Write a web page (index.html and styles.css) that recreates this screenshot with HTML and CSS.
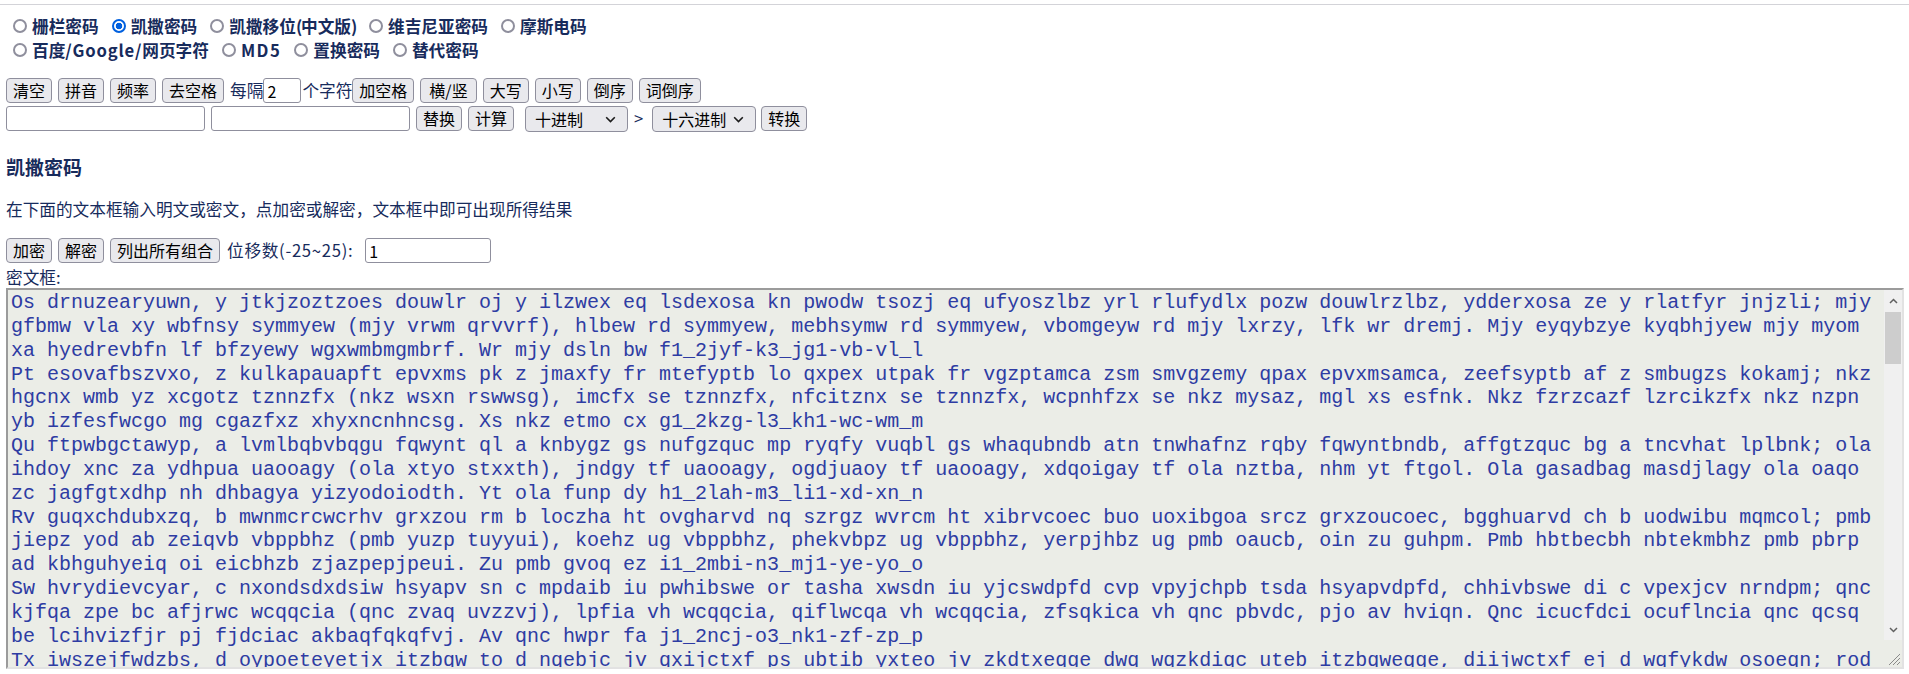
FILE: index.html
```html
<!DOCTYPE html>
<html lang="zh-CN">
<head>
<meta charset="utf-8">
<title>凯撒密码</title>
<link rel="stylesheet" href="styles.css">
</head>
<body>
<div class="topbar"></div>
<div class="page">
  <div class="modes">
    <div class="mode-row">
      <label class="mode"><input class="radio" type="radio" name="m"><span>栅栏密码</span></label>
      <label class="mode"><input class="radio" type="radio" name="m" checked><span>凯撒密码</span></label>
      <label class="mode"><input class="radio" type="radio" name="m"><span>凯撒移位<span class="paren">(</span>中文版<span class="paren">)</span></span></label>
      <label class="mode"><input class="radio" type="radio" name="m"><span>维吉尼亚密码</span></label>
      <label class="mode"><input class="radio" type="radio" name="m"><span>摩斯电码</span></label>
    </div>
    <div class="mode-row">
      <label class="mode"><input class="radio" type="radio" name="m"><span>百度<span class="latin">/Google/</span>网页字符</span></label>
      <label class="mode"><input class="radio" type="radio" name="m"><span class="latin-md">MD5</span></label>
      <label class="mode"><input class="radio" type="radio" name="m"><span>置换密码</span></label>
      <label class="mode"><input class="radio" type="radio" name="m"><span>替代密码</span></label>
    </div>
  </div>

  <div class="tools">
    <div class="tool-row">
      <button class="btn">清空</button>
      <button class="btn">拼音</button>
      <button class="btn">频率</button>
      <button class="btn">去空格</button>
      <span class="lbl">每隔</span><input class="text-input every" value="2"><span class="lbl lbl-after">个字符</span><button class="btn">加空格</button>
      <button class="btn btn-slash">横/竖</button>
      <button class="btn">大写</button>
      <button class="btn">小写</button>
      <button class="btn">倒序</button>
      <button class="btn">词倒序</button>
    </div>
    <div class="tool-row">
      <input class="text-input wide">
      <input class="text-input wide">
      <button class="btn">替换</button>
      <button class="btn btn-calc">计算</button>
      <span class="select sel-a">
        <select class="sel"><option>十进制</option><option>二进制</option><option>八进制</option><option>十六进制</option></select>
        <svg class="chev" width="11" height="7" viewBox="0 0 11 7"><polyline points="1.2,1.2 5.5,5.5 9.8,1.2" fill="none" stroke="#1b1b1b" stroke-width="1.6"/></svg>
      </span>
      <span class="lbl gt">&gt;</span>
      <span class="select sel-b">
        <select class="sel"><option>十六进制</option><option>十进制</option><option>二进制</option><option>八进制</option></select>
        <svg class="chev" width="11" height="7" viewBox="0 0 11 7"><polyline points="1.2,1.2 5.5,5.5 9.8,1.2" fill="none" stroke="#1b1b1b" stroke-width="1.6"/></svg>
      </span>
      <button class="btn">转换</button>
    </div>
  </div>

  <h3 class="title">凯撒密码</h3>
  <p class="desc">在下面的文本框输入明文或密文，点加密或解密，文本框中即可出现所得结果</p>

  <div class="actions">
    <button class="btn">加密</button>
    <button class="btn">解密</button>
    <button class="btn btn-list">列出所有组合</button>
    <span class="lbl shift-lbl">位移数(-25~25):</span>
    <input class="text-input shift" value="1">
  </div>
  <div class="field-label">密文框:</div>

  <div class="ta-wrap">
<textarea class="cipher" spellcheck="false">Os drnuzearyuwn, y jtkjzoztzoes douwlr oj y ilzwex eq lsdexosa kn pwodw tsozj eq ufyoszlbz yrl rlufydlx pozw douwlrzlbz, ydderxosa ze y rlatfyr jnjzli; mjy gfbmw vla xy wbfnsy symmyew (mjy vrwm qrvvrf), hlbew rd symmyew, mebhsymw rd symmyew, vbomgeyw rd mjy lxrzy, lfk wr dremj. Mjy eyqybzye kyqbhjyew mjy myom xa hyedrevbfn lf bfzyewy wgxwmbmgmbrf. Wr mjy dsln bw f1_2jyf-k3_jg1-vb-vl_l
Pt esovafbszvxo, z kulkapauapft epvxms pk z jmaxfy fr mtefyptb lo qxpex utpak fr vgzptamca zsm smvgzemy qpax epvxmsamca, zeefsyptb af z smbugzs kokamj; nkz hgcnx wmb yz xcgotz tznnzfx (nkz wsxn rswwsg), imcfx se tznnzfx, nfcitznx se tznnzfx, wcpnhfzx se nkz mysaz, mgl xs esfnk. Nkz fzrzcazf lzrcikzfx nkz nzpn yb izfesfwcgo mg cgazfxz xhyxncnhncsg. Xs nkz etmo cx g1_2kzg-l3_kh1-wc-wm_m
Qu ftpwbgctawyp, a lvmlbqbvbqgu fqwynt ql a knbygz gs nufgzquc mp ryqfy vuqbl gs whaqubndb atn tnwhafnz rqby fqwyntbndb, affgtzquc bg a tncvhat lplbnk; ola ihdoy xnc za ydhpua uaooagy (ola xtyo stxxth), jndgy tf uaooagy, ogdjuaoy tf uaooagy, xdqoigay tf ola nztba, nhm yt ftgol. Ola gasadbag masdjlagy ola oaqo zc jagfgtxdhp nh dhbagya yizyodoiodth. Yt ola funp dy h1_2lah-m3_li1-xd-xn_n
Rv guqxchdubxzq, b mwnmcrcwcrhv grxzou rm b loczha ht ovgharvd nq szrgz wvrcm ht xibrvcoec buo uoxibgoa srcz grxzoucoec, bgghuarvd ch b uodwibu mqmcol; pmb jiepz yod ab zeiqvb vbppbhz (pmb yuzp tuyyui), koehz ug vbppbhz, phekvbpz ug vbppbhz, yerpjhbz ug pmb oaucb, oin zu guhpm. Pmb hbtbecbh nbtekmbhz pmb pbrp ad kbhguhyeiq oi eicbhzb zjazpepjpeui. Zu pmb gvoq ez i1_2mbi-n3_mj1-ye-yo_o
Sw hvrydievcyar, c nxondsdxdsiw hsyapv sn c mpdaib iu pwhibswe or tasha xwsdn iu yjcswdpfd cvp vpyjchpb tsda hsyapvdpfd, chhivbswe di c vpexjcv nrndpm; qnc kjfqa zpe bc afjrwc wcqqcia (qnc zvaq uvzzvj), lpfia vh wcqqcia, qiflwcqa vh wcqqcia, zfsqkica vh qnc pbvdc, pjo av hviqn. Qnc icucfdci ocuflncia qnc qcsq be lcihvizfjr pj fjdciac akbaqfqkqfvj. Av qnc hwpr fa j1_2ncj-o3_nk1-zf-zp_p
Tx iwszejfwdzbs, d oypoeteyetjx itzbqw to d nqebjc jv qxijctxf ps ubtib yxteo jv zkdtxeqge dwq wqzkdiqc uteb itzbqweqge, diijwctxf ej d wqfykdw osoeqn; rod lkgrb aqf cd bgksxd xdrrdjb (rod awbr vwaawk), mqgjb wi xdrrdjb, rjgmxdrb wi xdrrdjb, agtrljdb wi rod qcwed, qkp bw iwjro. Rod jdvdgedj pdvgmodjb rod rdtr cf mdjiwjagks qk gkedjbd blcbrgrlrgwk. Bw rod ixqs gb k1_2odk-p3_ol1-ag-aq_q</textarea>
    <div class="sb">
      <div class="sb-btn">
        <svg width="9" height="6" viewBox="0 0 9 6"><polyline points="1,5 4.5,1.5 8,5" fill="none" stroke="#606060" stroke-width="1.5"/></svg>
      </div>
      <div class="sb-thumb"></div>
      <div class="sb-btn sb-down">
        <svg width="9" height="6" viewBox="0 0 9 6"><polyline points="1,1 4.5,4.5 8,1" fill="none" stroke="#606060" stroke-width="1.5"/></svg>
      </div>
    </div>
    <svg class="grip" width="14" height="14" viewBox="0 0 14 14">
      <line x1="13" y1="2" x2="2" y2="13" stroke="#8a8a8a" stroke-width="1"/>
      <line x1="13" y1="6" x2="6" y2="13" stroke="#8a8a8a" stroke-width="1"/>
      <line x1="13" y1="10" x2="10" y2="13" stroke="#8a8a8a" stroke-width="1"/>
    </svg>
  </div>
</div>
</body>
</html>
```
FILE: styles.css
```css
* {
  box-sizing: border-box;
}

html,
body {
  margin: 0;
  background: #ffffff;
}

body {
  font-family: "Noto Sans CJK SC", "Noto Sans", sans-serif;
  font-size: 16.67px;
  color: #172b5c;
}

.topbar {
  height: 5px;
  border-bottom: 1px solid #d3d3d8;
}

.page {
  padding: 0 5px 0 6px;
}

/* mode radios */
.modes {
  margin-top: 9px;
  padding-left: 7px;
  font-weight: 700;
}

.mode-row {
  display: flex;
  align-items: center;
  height: 24px;
  gap: 13px;
  line-height: 24px;
}

.mode {
  display: flex;
  align-items: center;
  gap: 5px;
  white-space: nowrap;
}

.paren {
  letter-spacing: -1.2px;
}

.latin {
  letter-spacing: 0.8px;
}

.latin-md {
  letter-spacing: 1.5px;
}

.radio {
  appearance: none;
  -webkit-appearance: none;
  width: 14px;
  height: 14px;
  margin: 0;
  border: 2px solid #8f8f9d;
  border-radius: 50%;
  background: #ffffff;
}

.radio:checked {
  border-color: #0060df;
  background: radial-gradient(circle, #0060df 0 3px, #ffffff 3.6px);
}

/* tool rows */
.tools {
  margin-top: 16px;
  display: flex;
  flex-direction: column;
  gap: 3px;
}

.tool-row {
  display: flex;
  align-items: center;
  height: 25px;
}

.btn {
  height: 25px;
  padding: 0 6px;
  margin: 0 6px 0 0;
  border: 1px solid #8f8f9d;
  border-radius: 4px;
  background: #e9e9ed;
  color: #000000;
  font-family: "Noto Sans CJK SC", "Noto Sans", sans-serif;
  font-size: 16px;
  line-height: 21px;
}

.btn-slash {
  padding: 0 8px;
}

.lbl {
  line-height: 25px;
  white-space: nowrap;
}

.lbl-after {
  margin-left: 1px;
}

.text-input {
  height: 25px;
  margin: 0;
  padding: 0 3px;
  border: 1px solid #8f8f9d;
  border-radius: 3px;
  background: #ffffff;
  color: #000000;
  font-family: "Noto Sans CJK SC", "Noto Sans", sans-serif;
  font-size: 16px;
}

.every {
  width: 38px;
}

.wide {
  width: 199px;
  margin-right: 6px;
}

.btn-calc {
  margin-right: 11px;
}

.select {
  position: relative;
  display: inline-flex;
}

.sel {
  appearance: none;
  -webkit-appearance: none;
  height: 26px;
  margin: 0;
  padding: 0 0 0 9px;
  border: 1px solid #8f8f9d;
  border-radius: 4px;
  background: #e9e9ed;
  color: #000000;
  font-family: "Noto Sans CJK SC", "Noto Sans", sans-serif;
  font-size: 16px;
}

.sel-a .sel {
  width: 103px;
}

.sel-b .sel {
  width: 104px;
}

.sel-a {
  margin-right: 6px;
}

.sel-b {
  margin-right: 5px;
}

.chev {
  position: absolute;
  right: 12px;
  top: 10px;
}

.gt {
  margin-right: 9px;
}

/* heading + description */
.title {
  margin: 23px 0 0;
  font-size: 19px;
  line-height: 26px;
  font-weight: 700;
}

.desc {
  margin: 17px 0 0;
  line-height: 24px;
}

.actions {
  margin-top: 17px;
  display: flex;
  align-items: center;
  height: 25px;
}

.btn-list {
  margin-right: 7px;
}

.shift-lbl {
  margin-right: 12px;
  letter-spacing: 0.7px;
}

.shift {
  width: 126px;
}

.field-label {
  margin-top: 3px;
  line-height: 22px;
}

/* cipher textarea */
.ta-wrap {
  position: relative;
  width: 1898px;
  height: 381px;
}

.cipher {
  display: block;
  width: 100%;
  height: 100%;
  margin: 0;
  padding: 1px 22px 0 3px;
  border: 2px solid;
  border-color: #9b9b9b #e2e2e2 #e2e2e2 #9b9b9b;
  background: #ebede7;
  color: #2e3ca3;
  font-family: "Liberation Mono", "Courier New", monospace;
  font-size: 20px;
  line-height: 23.85px;
  overflow: hidden;
  resize: none;
  outline: none;
}

.sb {
  position: absolute;
  top: 2px;
  right: 2px;
  width: 18px;
  height: 350px;
  background: #f0f0f0;
  display: flex;
  flex-direction: column;
}

.sb-btn {
  height: 21px;
  display: flex;
  align-items: center;
  justify-content: center;
}

.sb-thumb {
  height: 52px;
  margin: 1px 1px 0;
  background: #cdcdcd;
}

.sb-down {
  margin-top: auto;
}

.grip {
  position: absolute;
  right: 3px;
  bottom: 3px;
}
```
